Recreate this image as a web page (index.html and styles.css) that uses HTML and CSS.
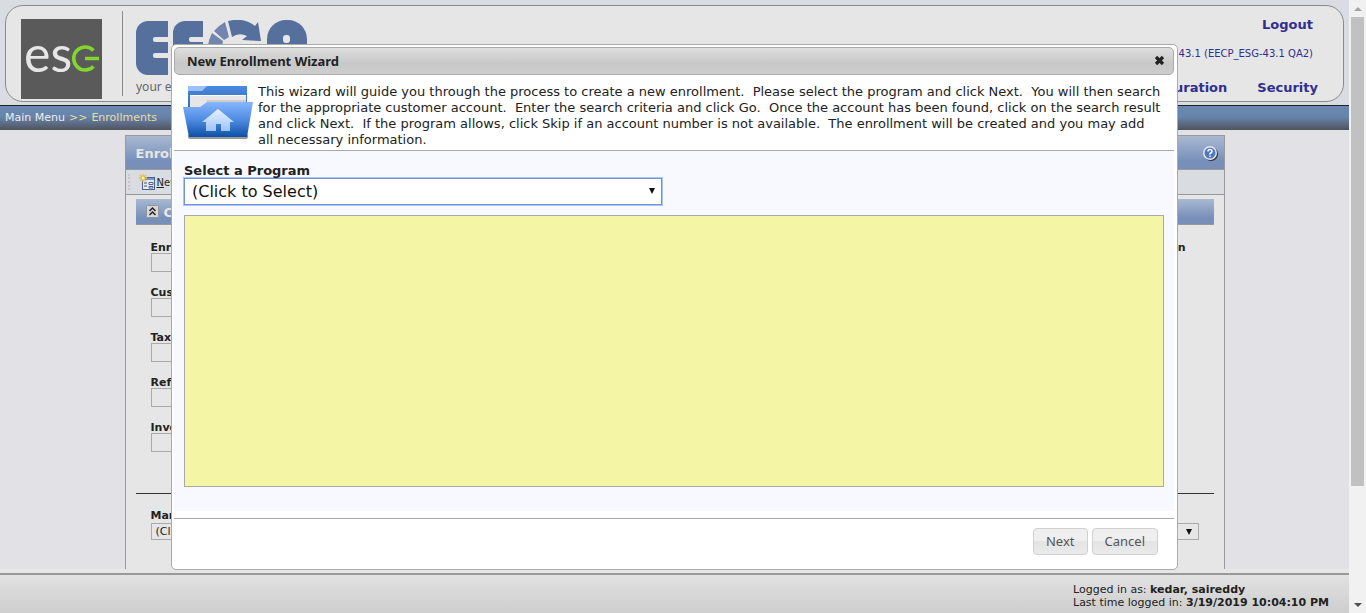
FILE: index.html
```html
<!DOCTYPE html>
<html lang="en">
<head>
<meta charset="utf-8">
<title>New Enrollment Wizard</title>
<link rel="stylesheet" href="styles.css">
</head>
<body>
<div class="window">
  <div class="app">
    <header class="banner">
      <svg class="esg-logo" width="81" height="80" viewBox="0 0 81 80" role="img" aria-label="esg">
        <rect width="81" height="80" fill="#5a5a5a"/>
        <text x="3" y="53" class="esg-text">es</text>
        <path d="M72.500 31.500A11.500 11.500 0 1 0 72.500 47.500M64 39.500H78" fill="none" stroke="#83d52f" stroke-width="3.600"/>
      </svg>
      <div class="brand">
        <svg width="172" height="57" viewBox="0 0 172 57" role="img" aria-label="EECP">
          <g fill="#55709c">
            <rect y="1" width="31" height="54" rx="12"/>
            <rect x="15" y="1" width="17" height="54"/>
            <rect x="37" y="1" width="30" height="54" rx="12"/>
            <rect x="52" y="1" width="15" height="54"/>
            <path d="M92 1Q108-3 119 6L122 2L125 21L106 20L111 16Q103 12 96 17Z"/>
            <rect x="131" width="40" height="55" rx="19"/>
          </g>
          <g fill="#7285ae">
            <path d="M89 2L93 17L88 20L78 11Q82 6 89 2Z"/>
            <path d="M76 13L87 21L84 40H72Q70 24 76 13Z"/>
          </g>
          <g fill="#e6e6e6">
            <rect x="17" y="17" width="20" height="5" rx="2"/>
            <rect x="17" y="33" width="20" height="5" rx="2"/>
            <rect x="53" y="17" width="16" height="5" rx="2"/>
            <rect x="147" y="15" width="7" height="8" rx="3"/>
          </g>
        </svg>
        <p class="tagline">your energy</p>
      </div>
      <nav class="account">
        <a class="menu-link" href="#">Logout</a>
        <span class="version">Version 43.1 (EECP_ESG-43.1 QA2)</span>
        <div class="menu"><a class="menu-link" href="#">Configuration</a><a class="menu-link" href="#">Security</a></div>
      </nav>
    </header>
    <nav class="crumbs"><a href="#">Main Menu</a><span>&gt;&gt;</span><span>Enrollments</span></nav>
    <main class="main">
      <section class="panel">
        <div class="panel-head">
          <h2>Enrollment</h2>
          <button class="help" type="button" aria-label="Help">
            <svg width="16" height="16" viewBox="0 0 16 16"><circle cx="9" cy="9" r="7" fill="#333"/><circle cx="8" cy="8" r="7" fill="#e8e8ee"/><circle cx="8" cy="8" r="5.500" fill="#5077c4"/><path d="M6 6.500Q6 4.500 8 4.500T10 6.500Q10 7.500 8 8.500V9.500M8 10.500V12" fill="none" stroke="#fff" stroke-width="1.500"/></svg>
          </button>
        </div>
        <div class="toolbar">
          <span class="grip"></span>
          <a href="#"><svg width="16" height="16" viewBox="0 0 16 16"><rect x="3.500" y="3.500" width="12" height="12" fill="#e4e8f0" stroke="#4d638d"/><path d="M4 5H15" stroke="#7894c8" stroke-width="2"/><path d="M5 9H8M5 12H8" stroke="#555" /><path d="M10 8.500H14V10.500H10ZM10 12.500H14V14H10Z" fill="#fff" stroke="#4d638d"/><path d="M4 0V8M0 4H8M1 1L7 7M7 1L1 7" stroke="#e3bb4c" stroke-width="1.300"/><circle cx="4" cy="4" r="1.500" fill="#fff3a8"/></svg><span><u>N</u>ew</span></a>
        </div>
        <div class="panel-body">
          <div class="section-bar">
            <svg width="13" height="13" viewBox="0 0 13 13"><rect x=".5" y=".5" width="12" height="12" rx="1" fill="#d6d8da" stroke="#8f959c"/><path d="M3.500 6L6.500 3L9.500 6M3.500 10L6.500 7L9.500 10" fill="none" stroke="#222" stroke-width="1.500"/></svg>
            <h3>Customer</h3>
          </div>
          <div class="form">
            <div class="fields">
              <label>Enrollment<input type="text"></label>
              <label>Customer<input type="text"></label>
              <label>Tax<input type="text"></label>
              <label>Reference<input type="text"></label>
              <label>Invoice<input type="text"></label>
            </div>
            <strong class="side-title">Information</strong>
          </div>
          <div class="market">
            <label for="market">Market</label>
            <select id="market"><option>(Click to Select)</option></select>
          </div>
        </div>
      </section>
    </main>
    <footer class="footer"><div class="login"><p>Logged in as: <b>kedar, saireddy</b></p><p>Last time logged in: <b>3/19/2019 10:04:10 PM</b></p></div></footer>
    <div class="overlay">
      <section class="dialog" role="dialog" aria-labelledby="dialog-title">
        <div class="titlebar">
          <h1 id="dialog-title">New Enrollment Wizard</h1>
          <button type="button" class="close" aria-label="Close"><svg width="11" height="11" viewBox="0 0 11 11"><path d="M2 2L9 9M9 2L2 9" stroke="#222" stroke-width="3.200"/></svg></button>
        </div>
        <div class="intro">
          <svg width="72" height="56" viewBox="0 0 72 56" aria-hidden="true">
            <defs>
              <linearGradient id="back" x2="0" y2="1"><stop stop-color="#4a8ae0"/><stop offset="1" stop-color="#2a63b8"/></linearGradient>
              <linearGradient id="front" x2="0" y2="1"><stop stop-color="#87b6fc"/><stop offset=".5" stop-color="#4f8ce2"/><stop offset="1" stop-color="#0c51a6"/></linearGradient>
              <linearGradient id="house" x2="0" y2="1"><stop stop-color="#e8f2ff"/><stop offset="1" stop-color="#9cc4fa"/></linearGradient>
            </defs>
            <rect x="6" y="50" width="60" height="5" rx="2" fill="#9a9a9a"/>
            <path d="M6 2H65V30H6Z" fill="url(#back)"/>
            <path d="M6 2H25L20 7H6Z" fill="#9bc2f7"/>
            <path d="M8 11H64V32H8Z" fill="#e6e6e6"/>
            <path d="M8 11.500H64" stroke="#fff"/>
            <path d="M25 17H64" stroke="#b5b5b5"/>
            <path d="M1 23H18L25 18H71L65 53H7Z" fill="url(#front)"/>
            <path d="M36 25L52 38H48V47H39V40H34V47H24V38H20Z" fill="url(#house)"/>
          </svg>
          <p>This wizard will guide you through the process to create a new enrollment.&nbsp; Please select the program and click Next.&nbsp; You will then search for the appropriate customer account.&nbsp; Enter the search criteria and click Go.&nbsp; Once the account has been found, click on the search result and click Next.&nbsp; If the program allows, click Skip if an account number is not available.&nbsp; The enrollment will be created and you may add all necessary information.</p>
        </div>
        <div class="step">
          <label for="program">Select a Program</label>
          <select id="program"><option>(Click to Select)</option></select>
          <div class="details"></div>
        </div>
        <div class="actions"><button type="button">Next</button><button type="button">Cancel</button></div>
      </section>
    </div>
  </div>
  <div class="scrollbar" aria-hidden="true">
    <span class="arrow up"></span>
    <span class="thumb"></span>
    <span class="track"></span>
    <span class="arrow down"></span>
  </div>
</div>
</body>
</html>
```
FILE: styles.css
```css
* { box-sizing: border-box; }
body {
  margin: 0;
  font-family: "DejaVu Sans", Verdana, sans-serif;
  font-size: 11px;
  color: #222;
}
h1, h2, h3, p { margin: 0; }
a { color: inherit; text-decoration: none; }
svg { display: block; flex: none; }
button, input, select { font: inherit; color: inherit; margin: 0; }

.window { display: flex; height: 100vh; overflow: hidden; }
.app {
  position: relative;
  flex: 1;
  min-width: 0;
  display: flex;
  flex-direction: column;
  background: #e2e1e6;
}

.banner {
  display: flex;
  height: 97px;
  margin: 5px 5px 0;
  padding: 0 30px 0 15px;
  border: 1px solid #8a8a8a;
  border-radius: 18px;
  background: #e6e6e6;
  box-shadow: 0 0 0 24px #d9dce1;
  clip-path: inset(-5px -5px -3px);
}
.esg-logo { margin-top: 13px; }
.esg-text { font: 50px Lato, sans-serif; fill: #e6e6e6; }
.brand {
  height: 85px;
  margin: 5px 0 0 20px;
  padding: 9px 0 0 13px;
  border-left: 1px solid #8a8a8a;
}
.tagline { margin-top: 3px; font: 12px/14px "Noto Sans", sans-serif; color: #666; }
.account {
  margin-left: auto;
  display: flex;
  flex-direction: column;
  align-items: flex-end;
  padding-top: 10px;
  color: #302e91;
}
.menu-link { font-size: 13px; line-height: 18px; font-weight: bold; }
.version { margin-top: 13px; font-size: 10px; line-height: 14px; }
.menu { display: flex; gap: 30px; margin: 18px -5px 0 0; }

.crumbs {
  flex: none;
  display: flex;
  gap: 4px;
  height: 25px;
  margin-top: 3px;
  padding-left: 5px;
  border-top: 1px solid #222;
  line-height: 23px;
  color: #e8dca0;
  background: linear-gradient(#6a88b0, #6784ab 45%, #50545e);
}
.crumbs a { color: #eee; }

.main {
  flex: 1;
  min-height: 0;
  padding: 5px 20px 0;
  overflow: hidden;
  display: flex;
  justify-content: center;
}
.panel {
  flex: 0 1 1100px;
  border: 1px solid #999;
  border-bottom: 0;
  background: #e6e6e6;
}
.panel-head, .section-bar {
  display: flex;
  align-items: center;
  color: #e6e6e6;
  background: linear-gradient(#a9b9d2, #7890b9 75%);
}
.panel-head { height: 34px; padding: 0 6px 0 10px; border-bottom: 1px solid #999; justify-content: space-between; }
.panel-head h2, .section-bar h3 { padding-top: 1px; font-size: 13px; }
.help { padding: 0; border: 0; background: none; }
.toolbar { display: flex; align-items: center; height: 25px; padding-left: 2px; border-bottom: 1px solid #999; background: #d9dde1; }
.toolbar a { display: flex; align-items: center; gap: 2px; font-size: 10px; }
.grip { width: 3px; height: 16px; margin-right: 8px; border-left: 2px dotted #c4c8cc; }
.panel-body { padding: 4px 10px 0; }
.section-bar { height: 26px; padding-left: 10px; gap: 5px; border-bottom: 1px solid #999; }
.form { display: flex; justify-content: space-between; height: 269px; padding: 16px 28px 0 15px; border-bottom: 1px solid #333; }
.form label, .market label { display: block; font-weight: bold; line-height: 14px; }
.fields { display: grid; grid-auto-rows: 30px; row-gap: 15px; align-content: start; width: 200px; }
.fields input { display: block; width: 100%; height: 19px; margin-top: -2px; border: 1px solid #aaa; background: #e6e6e6; }
.side-title { line-height: 14px; }
.market { padding: 15px 15px 0; }

select {
  display: block;
  appearance: none;
  border: 1px solid #aaa;
  border-radius: 0;
  background: url("data:image/svg+xml,%3Csvg xmlns='http://www.w3.org/2000/svg' width='6' height='6'%3E%3Cpath d='M0 0H6L3 6Z' fill='%23111'/%3E%3C/svg%3E") no-repeat right 6px center;
}
.market select { width: 100%; height: 17px; padding: 0 4px; }

.footer {
  display: flex;
  justify-content: flex-end;
  height: 44px;
  padding: 10px 20px 0 0;
  border-top: 4px solid #e6e6e6;
  box-shadow: inset 0 2px #999;
  background: linear-gradient(#e3e3e3, #cdcdcd);
  line-height: 13px;
}

.overlay { position: absolute; inset: 0; display: flex; align-items: center; justify-content: center; padding: 0 20px; }
.dialog {
  width: 100%;
  max-width: 1007px;
  padding: 2px 3px 2px 2px;
  border: 1px solid #aaa;
  border-radius: 5px;
  background: #fff;
}
.titlebar {
  display: flex;
  align-items: center;
  justify-content: space-between;
  height: 28px;
  padding: 0 8px 0 12px;
  border: 1px solid #aaa;
  border-radius: 5px;
  background: linear-gradient(#dedede, #c8c8c8 60%, #cdcdcd);
}
.titlebar h1 { font: bold 13px/18px "Noto Sans", sans-serif; }
.close { padding: 0; border: 0; background: none; }
.intro { display: flex; gap: 4px; padding: 9px 12px 2px 8px; border-bottom: 1px solid #aaa; }
.intro p { font-size: 13px; line-height: 16px; }
.step { height: 360px; padding: 12px 10px 0; background: #f8f9ff; }
.step label { display: block; font-size: 13px; line-height: 15px; font-weight: bold; }
.step select {
  width: 478px;
  max-width: 100%;
  height: 27px;
  padding: 0 7px;
  border-color: #6f93d8;
  box-shadow: 0 0 0 1px #a9c5fa;
  font-size: 16px;
  color: #111;
  background-color: #fff;
}
.details { height: 272px; margin-top: 10px; border: 1px solid #aaa; background: #f4f6a6; }
.actions { display: flex; justify-content: flex-end; gap: 4px; margin-top: 7px; padding: 9px 16px 12px; border-top: 1px solid #aaa; }
.actions button {
  height: 27px;
  padding: 0 12px;
  border: 1px solid #d0d0d0;
  border-radius: 4px;
  font: 13px "Noto Sans", sans-serif;
  color: #555;
  background: linear-gradient(#efefef 50%, #e4e4e4 50%, #eaeaea);
}

.scrollbar { flex: none; width: 17px; display: flex; flex-direction: column; align-items: center; background: #f1f1f1; }
.thumb { width: 13px; flex: 81; background: #c1c1c1; }
.track { flex: 19; }
.arrow { display: flex; align-items: center; justify-content: center; height: 17px; flex: none; }
.arrow::before { content: ""; border: 4px solid transparent; }
.up::before { border-bottom-color: #a3a3a3; border-top: 0; }
.down::before { border-top-color: #505050; border-bottom: 0; }
```
